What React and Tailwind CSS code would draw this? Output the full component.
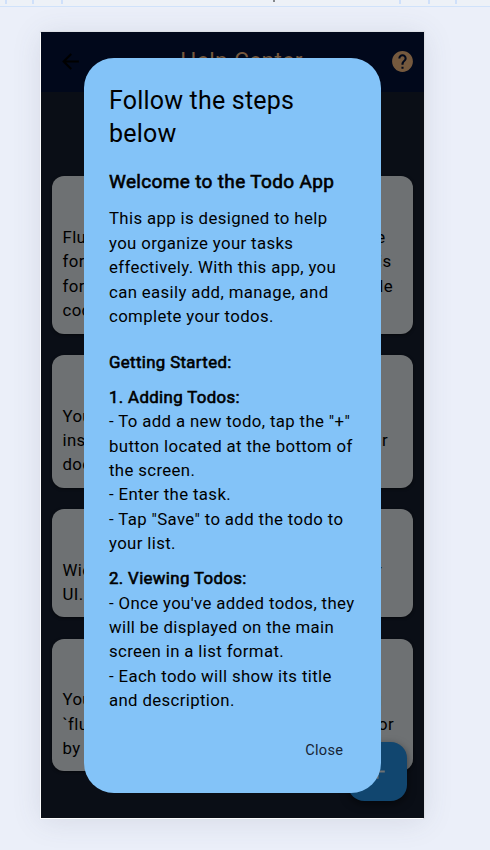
import React from 'react';

const BODY = 'text-[16.8px] leading-[24.4px] tracking-[0.365px]';

const cards = [
  { height: 'h-[157.3px]', lines: [['Flut', 'the', 27.5], ['for', 'is', 21.5], ['for', 'single', 20], ['cod', '', 0]] },
  { height: 'h-[133px]', lines: [['You', '', 0], ['inst', 'your', 25], ['doc', '', 0]] },
  { height: 'h-[108px]', lines: [['Wid', 'r', 31], ['UI.', '', 0]] },
  { height: 'h-[132.3px]', lines: [['You', 'g', 31], ['`flut', 'or', 19], ['by', '', 0]] },
];

function Card({ height, lines }) {
  return (
    <div className={`${height} rounded-[12px] bg-[#6e7173] pl-[10.5px] pt-[48.5px] shadow-[0_1px_3px_rgba(0,0,0,0.5)] ${BODY}`}>
      {lines.map(([left, right, inset], i) => (
        <div key={i} className="flex justify-between whitespace-nowrap">
          <span>{left}</span>
          <span style={{ paddingRight: inset }}>{right}</span>
        </div>
      ))}
    </div>
  );
}

function Heading({ children, className = '' }) {
  return <h3 className={`font-normal [-webkit-text-stroke:0.6px_#000] ${className}`}>{children}</h3>;
}

function Dialog() {
  return (
    <div className="absolute left-[42.6px] top-[25.6px] flex h-[735.4px] w-[297.6px] flex-col rounded-[30px] bg-[#83c3f8] px-[25.4px] pt-[26px]">
      <h2 className="text-[25px] leading-[33.6px] tracking-[0.2px]">Follow the steps<br />below</h2>
      <Heading className="mt-[19.3px] text-[19px] leading-[24px] tracking-[0.34px]">Welcome to the Todo App</Heading>
      <p className={`mt-[12.4px] whitespace-nowrap ${BODY}`}>
        This app is designed to help<br />you organize your tasks<br />effectively. With this app, you<br />can easily add, manage, and<br />complete your todos.
      </p>
      <Heading className={`mt-[21.5px] ${BODY}`}>Getting Started:</Heading>
      <Heading className={`mt-[10.4px] ${BODY}`}>1. Adding Todos:</Heading>
      <p className={`whitespace-nowrap ${BODY}`}>
        - To add a new todo, tap the "+"<br />button located at the bottom of<br />the screen.<br />- Enter the task.<br />- Tap "Save" to add the todo to<br />your list.
      </p>
      <Heading className={`mt-[10.6px] ${BODY}`}>2. Viewing Todos:</Heading>
      <p className={`whitespace-nowrap ${BODY}`}>
        - Once you've added todos, they<br />will be displayed on the main<br />screen in a list format.<br />- Each todo will show its title<br />and description.
      </p>
      <button className="mr-[12.5px] mt-[27.5px] self-end text-[14.6px] leading-5 tracking-[0.3px] text-[#172536]">Close</button>
    </div>
  );
}

export default function App() {
  return (
    <div className="flex h-[850px] w-[490px] flex-col overflow-hidden bg-[#ebeff9] font-['Roboto','Liberation_Sans',sans-serif] text-black">
      <div className="relative h-[7px] shrink-0 border-b border-[#d0e2fa] bg-[#edf1f7]">
        <span className="absolute left-[5px] top-0 h-1 w-[2px] bg-[#cfe0fa]" />
        <span className="absolute left-[32px] top-0 h-1 w-[2px] bg-[#cfe0fa]" />
        <span className="absolute left-[61px] top-0 h-1 w-[2px] bg-[#cfe0fa]" />
        <span className="absolute left-[273px] top-0 h-[2px] w-[2px] bg-[#85888c]" />
        <span className="absolute left-[399px] top-0 h-1 w-[2px] bg-[#cfe0fa]" />
        <span className="absolute left-[428px] top-0 h-1 w-[2px] bg-[#cfe0fa]" />
        <span className="absolute left-[455px] top-0 h-1 w-[2px] bg-[#cfe0fa]" />
      </div>
      <main className="relative ml-[41px] mt-[25px] h-[786px] w-[383px] shrink-0 bg-[#0a0e16] shadow-[-1px_1px_0_#fcfcfd,0_0_1px_1px_#dcdfe5,0_3px_28px_rgba(70,80,100,0.13)]">
        <header className="flex h-[59.5px] items-center justify-between bg-[#01081b] pl-[17px] pr-[9px] text-[#75593e]">
          <svg className="size-[25px] text-black" viewBox="0 0 24 24" fill="currentColor"><path d="M20 11H7.83l5.59-5.59L12 4l-8 8 8 8 1.41-1.41L7.83 13H20z" /></svg>
          <h1 className="mb-[2px] ml-[10px] text-[22.6px] leading-7 tracking-[0.4px]">Help Center</h1>
          <svg className="size-[25px]" viewBox="0 0 24 24" fill="currentColor"><path d="M12 2C6.48 2 2 6.48 2 12s4.48 10 10 10 10-4.48 10-10S17.52 2 12 2zm1 17h-2v-2h2v2zm2.07-7.75l-.9.92C13.45 12.9 13 13.5 13 15h-2v-.5c0-1.1.45-2.1 1.17-2.83l1.24-1.26c.37-.36.59-.86.59-1.41 0-1.1-.9-2-2-2s-2 .9-2 2H8c0-2.21 1.79-4 4-4s4 1.79 4 4c0 .88-.36 1.68-.93 2.25z" /></svg>
        </header>
        <section className="flex flex-col gap-[21.4px] px-[11px] pt-[84.9px]">
          {cards.map((card, i) => <Card key={i} {...card} />)}
        </section>
        <div className="absolute left-[307px] top-[709.5px] flex size-[59px] items-center justify-center rounded-[16.3px] bg-[#11466f] shadow-[0_3px_8px_rgba(0,0,0,0.5)]">
          <svg className="size-[25px] text-[#6e7173]" viewBox="0 0 24 24" fill="currentColor"><path d="M19 13h-6v6h-2v-6H5v-2h6V5h2v6h6z" /></svg>
        </div>
        <Dialog />
      </main>
    </div>
  );
}
